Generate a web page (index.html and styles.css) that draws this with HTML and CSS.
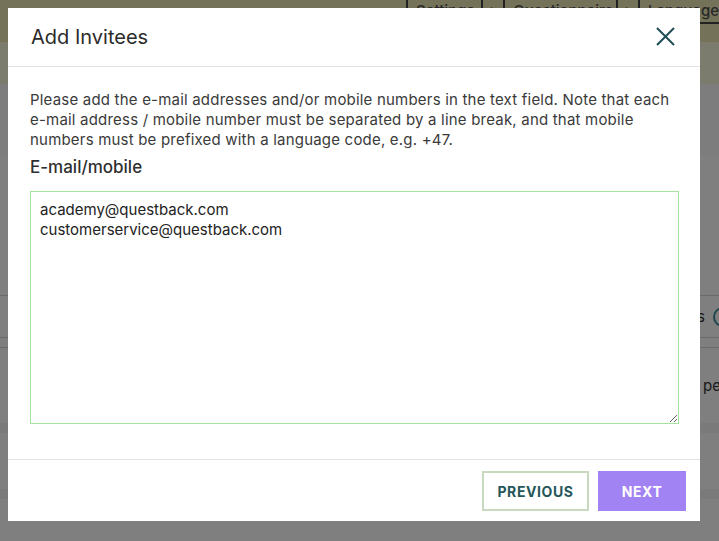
FILE: index.html
```html
<!DOCTYPE html>
<html lang="en">
<head>
    <meta charset="UTF-8">
    <meta name="viewport" content="width=device-width, initial-scale=1.0">
    <link rel="stylesheet" href="styles.css">
    <title>Add Invitees</title>
</head>
<body>

    <div class="page">
        <header class="top-bar">
            <nav class="crumbs">
                <span class="crumb settings">Settings</span>
                <span class="crumb sep">&gt;</span>
                <span class="crumb questionnaire">Questionnaire</span>
                <span class="crumb sep">&gt;</span>
                <span class="crumb">Language</span>
            </nav>
        </header>
        <div class="sub-bar"></div>
        <div class="intro"></div>
        <div class="content">
            <div class="row-line first"></div>
            <div class="row tools"><span>s</span><span class="circle"></span></div>
            <div class="row-line"></div>
            <div class="row-line"></div>
            <div class="row text"><span>pe</span></div>
            <div class="stripe one"></div>
            <div class="stripe two"></div>
        </div>
    </div>

    <div class="overlay"></div>

    <div class="modal">
        <div class="modal-header">
            <h2 class="modal-title">Add Invitees</h2>
            <button class="close-btn" aria-label="Close">
                <svg width="19" height="19" viewBox="0 0 19 19">
                    <path d="M1 1 L18 18 M18 1 L1 18" stroke="#1f4f55" stroke-width="2" fill="none"/>
                </svg>
            </button>
        </div>
        <div class="modal-body">
            <p class="hint">Please add the e-mail addresses and/or mobile numbers in the text field. Note that each e-mail address / mobile number must be separated by a line break, and that mobile numbers must be prefixed with a language code, e.g. +47.</p>
            <label class="field-label" for="invitees">E-mail/mobile</label>
            <textarea id="invitees" class="invitees">academy@questback.com
customerservice@questback.com</textarea>
        </div>
        <div class="modal-footer">
            <button class="btn btn-outline">PREVIOUS</button>
            <button class="btn btn-primary">NEXT</button>
        </div>
    </div>

</body>
</html>
```

FILE: styles.css
```css
body {
    margin: 0;
    font-family: 'Inter', 'Noto Sans', sans-serif;
    background-color: #ffffff;
    overflow: hidden;
}

.page {
    height: 541px;
    display: flex;
    flex-direction: column;
}

.top-bar {
    height: 42px;
    background-color: #e8e7b4;
    display: flex;
    justify-content: flex-end;
    align-items: flex-start;
}

.crumbs {
    display: flex;
    margin-left: 406px;
    width: 313px;
    height: 22px;
    border-bottom: 2px solid #444444;
    overflow: hidden;
}

.crumb {
    box-sizing: border-box;
    padding: 1px 0 0 8px;
    border-left: 2px solid #444444;
    font-size: 15px;
    font-weight: 500;
    color: #505050;
    white-space: nowrap;
}

.crumb.settings {
    width: 76px;
}

.crumb.sep {
    width: 22px;
    padding-left: 6px;
}

.crumb.questionnaire {
    width: 114px;
}

.sub-bar {
    height: 42px;
    background-color: #f6f6dc;
}

.intro {
    height: 71px;
    background-color: #fafafa;
}

.content {
    flex: 1;
    display: flex;
    flex-direction: column;
    align-items: stretch;
}

.row-line {
    height: 1px;
    background-color: #d4d4d4;
}

.row-line.first {
    margin-top: 140px;
}

.row {
    display: flex;
    justify-content: flex-end;
    align-items: center;
    gap: 8px;
    color: #333333;
    font-size: 15px;
}

.row.tools {
    height: 41px;
    margin-right: -14px;
}

.row-line + .row-line {
    margin-top: 9px;
}

.row.text {
    height: 30px;
    margin-top: 22px;
    margin-right: -2px;
}

.circle {
    width: 16px;
    height: 16px;
    border: 2px solid #3f8f99;
    border-radius: 50%;
}

.stripe {
    height: 10px;
    background-color: #f4f4f4;
}

.stripe.one {
    margin-top: 23px;
}

.stripe.two {
    margin-top: 56px;
}

.overlay {
    position: fixed;
    inset: 0;
    background-color: rgba(0, 0, 0, 0.5);
}

.modal {
    position: fixed;
    left: 8px;
    top: 8px;
    width: 692px;
    height: 513px;
    background-color: #ffffff;
    display: flex;
    flex-direction: column;
}

.modal-header {
    height: 58px;
    border-bottom: 1px solid #e2e2e2;
    display: flex;
    align-items: center;
    justify-content: space-between;
    padding: 0 24px 0 23px;
}

.modal-title {
    margin: 0;
    font-size: 20px;
    font-weight: 400;
    color: #2b2b2b;
}

.close-btn {
    background: none;
    border: none;
    padding: 0;
    width: 19px;
    height: 19px;
    cursor: pointer;
    margin-top: -1px;
    margin-right: 1px;
}

.modal-body {
    flex: 1;
    padding: 23px 21px 0 22px;
    display: flex;
    flex-direction: column;
}

.hint {
    margin: 0;
    font-size: 15px;
    line-height: 20px;
    letter-spacing: 0.2px;
    color: #3a3a3a;
}

.field-label {
    margin-top: 5px;
    font-size: 17px;
    line-height: 24px;
    font-weight: 500;
    color: #2f2f2f;
}

.invitees {
    margin-top: 12px;
    height: 233px;
    box-sizing: border-box;
    padding: 8px 9px;
    border: 1px solid #a6e3a0;
    font-family: 'Inter', 'Noto Sans', sans-serif;
    font-size: 15px;
    line-height: 20px;
    color: #222222;
    resize: vertical;
    outline: none;
}

.modal-footer {
    height: 62px;
    border-top: 1px solid #e2e2e2;
    display: flex;
    justify-content: flex-end;
    align-items: flex-start;
    gap: 9px;
    padding: 11px 14px 0 0;
    box-sizing: border-box;
}

.btn {
    height: 40px;
    font-family: 'Inter', 'Noto Sans', sans-serif;
    font-size: 14px;
    font-weight: 700;
    letter-spacing: 0.6px;
    cursor: pointer;
}

.btn-outline {
    width: 107px;
    background-color: #ffffff;
    border: 2px solid #c8d9c0;
    color: #25575a;
}

.btn-primary {
    width: 88px;
    background-color: #a283f4;
    border: none;
    color: #ffffff;
}
```
